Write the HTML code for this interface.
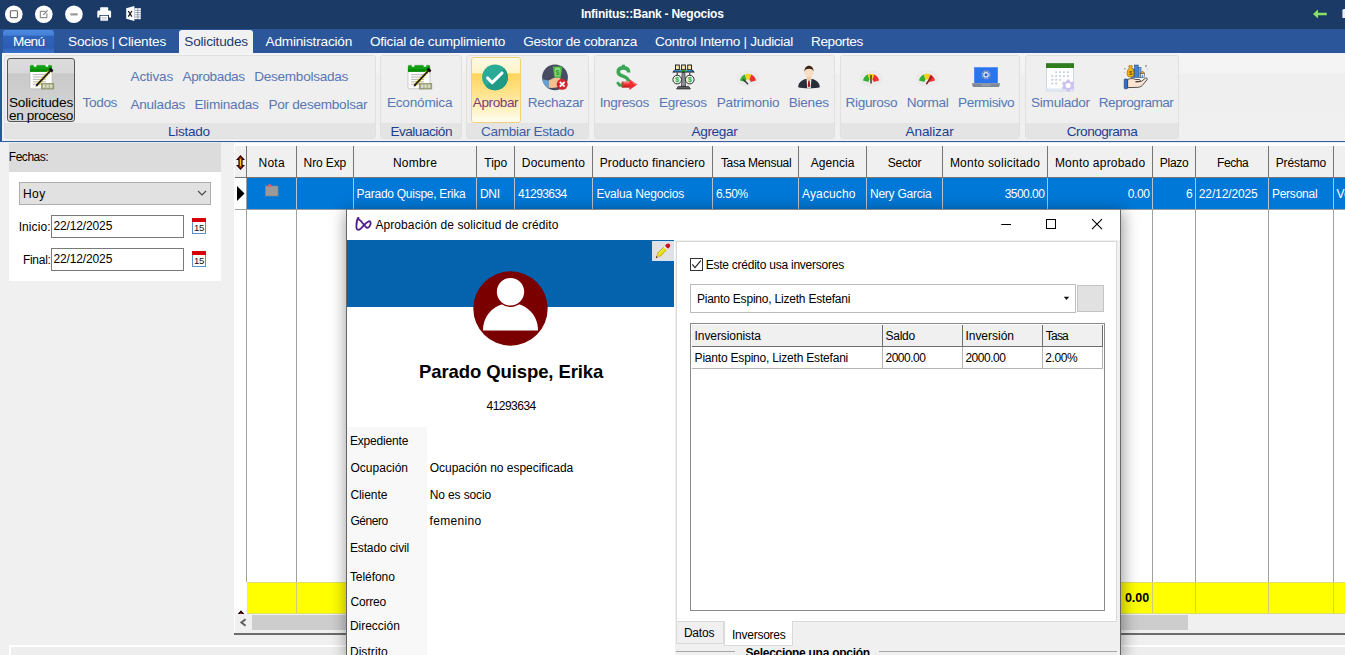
<!DOCTYPE html>
<html><head><meta charset="utf-8">
<style>
*{box-sizing:border-box;margin:0;padding:0}
html,body{width:1345px;height:655px;overflow:hidden;background:#f0f0f0;font-family:"Liberation Sans",sans-serif;}
.a{position:absolute}
.t{position:absolute;white-space:nowrap;line-height:1}
.grp{position:absolute;top:55px;height:84px;background:#efefef;border:1px solid #e0e0e0;border-radius:3px}
.grp i{position:absolute;left:0;right:0;bottom:0;height:15px;background:#e4e4e4;display:block}
.hd{position:absolute;top:146px;height:32px;background:#f0f0f0;border-right:1px solid #767676;border-bottom:1px solid #767676}
.vl{position:absolute;top:178px;width:1px;height:435px;background:#a0a0a0}
</style></head><body>
<div class="a" style="left:0;top:0;width:1345px;height:29px;background:#1b3a66"></div>
<svg class="a" style="left:0;top:0" width="160" height="29" viewBox="0 0 160 29">
<circle cx="13.8" cy="14.3" r="8.8" fill="#fff"/><rect x="10.4" y="10.8" width="7" height="6.8" rx=".8" fill="none" stroke="#6a6a6a" stroke-width="1.1"/>
<circle cx="43.8" cy="14.3" r="8.8" fill="#fff"/><path d="M45.6 11.3h-5.3v6.4h6.6v-4.4" fill="none" stroke="#777" stroke-width="1"/><path d="M43.4 14.8l4.2-4.4" stroke="#777" stroke-width="1.1"/>
<circle cx="73.9" cy="14.3" r="8.8" fill="#fff"/><rect x="70.1" y="13.2" width="7.8" height="2.3" rx="1.1" fill="#9a9a9a"/>
<g fill="#fff"><rect x="100.2" y="7.2" width="8" height="4.2" rx=".6"/><path d="M98.6 10.6h11.2a1.3 1.3 0 0 1 1.3 1.3v5.6h-2.1v-2.6h-9.6v2.6h-2.1v-5.6a1.3 1.3 0 0 1 1.3-1.3z"/><rect x="100.4" y="15.8" width="7.6" height="5" rx=".4"/></g>
<path d="M101.6 17.6h5.2M101.6 19.2h5.2" stroke="#9aa3b5" stroke-width=".6"/>
<path d="M126.2 8.3l8.2-2.3v15l-8.2-2.3z" fill="#fff"/><rect x="134.4" y="8.2" width="6.4" height="11" fill="#fff"/>
<path d="M134.8 10.4h6M134.8 12.6h6M134.8 14.8h6M134.8 17h6M137.8 8.2v11" stroke="#5a6d8c" stroke-width=".6"/>
<path d="M128.3 11l3.6 5.6M131.9 11l-3.6 5.6" stroke="#1c1c1c" stroke-width="1.3"/>
</svg>
<div class="t" style="left:580.90px;top:8.00px;font-size:12px;color:#fff;font-weight:bold;letter-spacing:-0.230px;">Infinitus::Bank - Negocios</div>
<svg class="a" style="left:1310px;top:6px" width="35" height="16" viewBox="0 0 35 16"><path d="M3 8l5-4.600v3.400h8.800v2.400h-8.800v3.400z" fill="#8be066"/><path d="M32.400 4.500a1.500 1.500 0 0 1 1.500-1.500h2v9h-3.500z" fill="#e8eef8"/></svg>
<div class="a" style="left:0;top:29px;width:1345px;height:24px;background:#2b579a"></div>
<div class="a" style="left:3px;top:30px;width:51px;height:23px;border-radius:3px 3px 0 0;background:linear-gradient(#4d8ae0 0,#4380d6 22%,#2f63ba 28%,#2c5db2 75%,#3b74cc 100%)"></div>
<div class="t" style="left:13.10px;top:34.50px;font-size:13.6px;color:#fff;font-weight:normal;letter-spacing:-0.704px;">Menú</div>
<div class="t" style="left:68.10px;top:34.50px;font-size:13.6px;color:#fff;font-weight:normal;letter-spacing:-0.182px;">Socios | Clientes</div>
<div class="a" style="left:179px;top:30px;width:74px;height:24px;border-radius:3px 3px 0 0;background:#f1f1f1"></div>
<div class="t" style="left:184.30px;top:34.50px;font-size:13.6px;color:#1e3a6e;font-weight:normal;letter-spacing:-0.195px;">Solicitudes</div>
<div class="t" style="left:265.50px;top:34.50px;font-size:13.6px;color:#fff;font-weight:normal;letter-spacing:-0.183px;">Administración</div>
<div class="t" style="left:369.90px;top:34.50px;font-size:13.6px;color:#fff;font-weight:normal;letter-spacing:-0.227px;">Oficial de cumplimiento</div>
<div class="t" style="left:523.30px;top:34.50px;font-size:13.6px;color:#fff;font-weight:normal;letter-spacing:-0.311px;">Gestor de cobranza</div>
<div class="t" style="left:654.90px;top:34.50px;font-size:13.6px;color:#fff;font-weight:normal;letter-spacing:-0.317px;">Control Interno | Judicial</div>
<div class="t" style="left:811.00px;top:34.50px;font-size:13.6px;color:#fff;font-weight:normal;letter-spacing:-0.409px;">Reportes</div>
<div class="a" style="left:0;top:53px;width:1345px;height:88px;background:linear-gradient(#f4f4f4 0,#f3f3f3 22%,#efefef 24%,#f0f0f0 100%)"></div>
<div class="a" style="left:0;top:53px;width:2px;height:88px;background:#2b579a"></div>
<div class="a" style="left:0;top:141px;width:1345px;height:1px;background:#34609f"></div>
<div class="a" style="left:0;top:142px;width:1345px;height:1px;background:#e9edf3"></div>
<div class="grp" style="left:4px;width:372px"><i></i></div>
<div class="grp" style="left:380px;width:82px"><i></i></div>
<div class="grp" style="left:466px;width:123px"><i></i></div>
<div class="grp" style="left:594px;width:241px"><i></i></div>
<div class="grp" style="left:840px;width:180px"><i></i></div>
<div class="grp" style="left:1025px;width:154px"><i></i></div>
<div class="t" style="left:168.00px;top:124.90px;font-size:13.6px;color:#1e3f8f;font-weight:normal;letter-spacing:-0.278px;">Listado</div>
<div class="t" style="left:390.40px;top:124.90px;font-size:13.6px;color:#1e3f8f;font-weight:normal;letter-spacing:-0.492px;">Evaluación</div>
<div class="t" style="left:481.00px;top:124.90px;font-size:13.6px;color:#3c5ea6;font-weight:normal;letter-spacing:-0.326px;">Cambiar Estado</div>
<div class="t" style="left:691.40px;top:124.90px;font-size:13.6px;color:#1e3f8f;font-weight:normal;letter-spacing:-0.311px;">Agregar</div>
<div class="t" style="left:905.60px;top:124.90px;font-size:13.6px;color:#1e3f8f;font-weight:normal;letter-spacing:-0.141px;">Analizar</div>
<div class="t" style="left:1066.80px;top:124.90px;font-size:13.6px;color:#1e3f8f;font-weight:normal;letter-spacing:-0.516px;">Cronograma</div>
<div class="a" style="left:7px;top:58px;width:68px;height:64px;border:1px solid #555;border-radius:3px;background:linear-gradient(#dcdcdc 0,#d8d8d8 22%,#c9c9c9 24%,#d6d6d6 100%)"></div>
<div class="t" style="left:8.90px;top:95.70px;font-size:13.6px;color:#000;font-weight:normal;letter-spacing:-0.141px;">Solicitudes</div>
<div class="t" style="left:8.90px;top:108.70px;font-size:13.6px;color:#000;font-weight:normal;letter-spacing:-0.307px;">en proceso</div>
<div class="t" style="left:82.60px;top:95.70px;font-size:13.6px;color:#5777b3;font-weight:normal;letter-spacing:-0.376px;">Todos</div>
<div class="t" style="left:130.50px;top:69.70px;font-size:13.6px;color:#5777b3;font-weight:normal;letter-spacing:-0.190px;">Activas</div>
<div class="t" style="left:182.50px;top:69.70px;font-size:13.6px;color:#5777b3;font-weight:normal;letter-spacing:-0.407px;">Aprobadas</div>
<div class="t" style="left:254.20px;top:69.70px;font-size:13.6px;color:#5777b3;font-weight:normal;letter-spacing:-0.276px;">Desembolsadas</div>
<div class="t" style="left:130.50px;top:98.40px;font-size:13.6px;color:#5777b3;font-weight:normal;letter-spacing:-0.273px;">Anuladas</div>
<div class="t" style="left:194.50px;top:98.40px;font-size:13.6px;color:#5777b3;font-weight:normal;letter-spacing:-0.240px;">Eliminadas</div>
<div class="t" style="left:268.40px;top:98.40px;font-size:13.6px;color:#5777b3;font-weight:normal;letter-spacing:-0.258px;">Por desembolsar</div>
<div class="t" style="left:386.90px;top:95.70px;font-size:13.6px;color:#5777b3;font-weight:normal;letter-spacing:-0.206px;">Económica</div>
<div class="a" style="left:471px;top:57px;width:50px;height:66px;border:1px solid #f0d17a;border-radius:3px;background:linear-gradient(#fffae4 0,#fff4c8 23%,#ffd45c 25%,#ffe38c 55%,#fff6d0 85%,#fffdf2 100%)"></div>
<div class="t" style="left:472.80px;top:95.70px;font-size:13.6px;color:#7a3b7c;font-weight:normal;letter-spacing:-0.425px;">Aprobar</div>
<div class="t" style="left:527.80px;top:95.70px;font-size:13.6px;color:#5777b3;font-weight:normal;letter-spacing:-0.323px;">Rechazar</div>
<div class="t" style="left:599.70px;top:95.70px;font-size:13.6px;color:#5777b3;font-weight:normal;letter-spacing:-0.368px;">Ingresos</div>
<div class="t" style="left:658.90px;top:95.70px;font-size:13.6px;color:#5777b3;font-weight:normal;letter-spacing:-0.282px;">Egresos</div>
<div class="t" style="left:716.80px;top:95.70px;font-size:13.6px;color:#5777b3;font-weight:normal;letter-spacing:-0.258px;">Patrimonio</div>
<div class="t" style="left:788.80px;top:95.70px;font-size:13.6px;color:#5777b3;font-weight:normal;letter-spacing:-0.280px;">Bienes</div>
<div class="t" style="left:845.50px;top:95.70px;font-size:13.6px;color:#5777b3;font-weight:normal;letter-spacing:-0.338px;">Riguroso</div>
<div class="t" style="left:906.70px;top:95.70px;font-size:13.6px;color:#5777b3;font-weight:normal;letter-spacing:-0.352px;">Normal</div>
<div class="t" style="left:958.10px;top:95.70px;font-size:13.6px;color:#5777b3;font-weight:normal;letter-spacing:-0.386px;">Permisivo</div>
<div class="t" style="left:1031.10px;top:95.70px;font-size:13.6px;color:#5777b3;font-weight:normal;letter-spacing:-0.289px;">Simulador</div>
<div class="t" style="left:1098.80px;top:95.70px;font-size:13.6px;color:#5777b3;font-weight:normal;letter-spacing:-0.499px;">Reprogramar</div>
<svg class="a" style="left:29px;top:64px" width="26" height="26" viewBox="0 0 26 26">
<rect x="1" y="1.2" width="22" height="23.6" rx="1.2" fill="#fdfdfd" stroke="#b9b9b9" stroke-width=".7"/>
<path d="M1 2.4a1.2 1.2 0 0 1 1.2-1.2h19.6a1.2 1.2 0 0 1 1.2 1.2v5.4H1z" fill="#12a012"/>
<path d="M1 5.2h22v2.6H1z" fill="#0a8a0a"/>
<rect x="4.8" y=".2" width="2.6" height="2.6" fill="#f4f4f4"/><rect x="16.6" y=".2" width="2.6" height="2.6" fill="#f4f4f4"/>
<path d="M4 10.6h13M4 13h13M4 15.4h13M4 17.8h13M4 20.2h9" stroke="#9a9a9a" stroke-width=".7"/>
<rect x="12.4" y="19.4" width="12.4" height="5.6" fill="#a7ad84" stroke="#7d845c" stroke-width=".6"/>
<rect x="14" y="20.6" width="2.4" height="3.2" fill="#d9dcc3"/><rect x="17.4" y="20.6" width="2.4" height="3.2" fill="#d9dcc3"/><rect x="20.8" y="20.6" width="2.4" height="3.2" fill="#d9dcc3"/>
<path d="M8.4 20.6L21.6 6.4" stroke="#e8c21a" stroke-width="3.4" stroke-dasharray="1.6 1"/>
<path d="M7.6 21.4L23 5" stroke="#1a1a1a" stroke-width="1.7"/>
<path d="M21.2 3.6l3.2 3-1.6 1.8-3.2-3z" fill="#111"/>
<path d="M6.6 22.6l.6-2.6 2 1.9z" fill="#222"/>
</svg>
<svg class="a" style="left:407px;top:64px" width="26" height="26" viewBox="0 0 26 26">
<rect x="1" y="1.2" width="22" height="23.6" rx="1.2" fill="#fdfdfd" stroke="#b9b9b9" stroke-width=".7"/>
<path d="M1 2.4a1.2 1.2 0 0 1 1.2-1.2h19.6a1.2 1.2 0 0 1 1.2 1.2v5.4H1z" fill="#12a012"/>
<path d="M1 5.2h22v2.6H1z" fill="#0a8a0a"/>
<rect x="4.8" y=".2" width="2.6" height="2.6" fill="#f4f4f4"/><rect x="16.6" y=".2" width="2.6" height="2.6" fill="#f4f4f4"/>
<path d="M4 10.6h13M4 13h13M4 15.4h13M4 17.8h13M4 20.2h9" stroke="#9a9a9a" stroke-width=".7"/>
<rect x="12.4" y="19.4" width="12.4" height="5.6" fill="#a7ad84" stroke="#7d845c" stroke-width=".6"/>
<rect x="14" y="20.6" width="2.4" height="3.2" fill="#d9dcc3"/><rect x="17.4" y="20.6" width="2.4" height="3.2" fill="#d9dcc3"/><rect x="20.8" y="20.6" width="2.4" height="3.2" fill="#d9dcc3"/>
<path d="M8.4 20.6L21.6 6.4" stroke="#e8c21a" stroke-width="3.4" stroke-dasharray="1.6 1"/>
<path d="M7.6 21.4L23 5" stroke="#1a1a1a" stroke-width="1.7"/>
<path d="M21.2 3.6l3.2 3-1.6 1.8-3.2-3z" fill="#111"/>
<path d="M6.6 22.6l.6-2.6 2 1.9z" fill="#222"/>
</svg>
<svg class="a" style="left:482px;top:63.5px" width="27" height="27" viewBox="0 0 27 27">
<circle cx="13" cy="13.3" r="12.9" fill="#2aab96"/>
<path d="M22.2 4.3A12.9 12.9 0 0 1 3.9 22.5z" fill="#1f9a86"/>
<path d="M5.6 14l4.6 4.6L20 9" fill="none" stroke="#fff" stroke-width="3.1" stroke-linecap="round" stroke-linejoin="round"/>
</svg>
<svg class="a" style="left:542px;top:63.5px" width="27" height="27" viewBox="0 0 27 27">
<defs><clipPath id="rc"><circle cx="13" cy="13.3" r="12.9"/></clipPath></defs>
<circle cx="13" cy="13.3" r="12.9" fill="#474c62"/>
<g clip-path="url(#rc)">
<path d="M10.8 2.4h9.6l-1.6 11.4h-6.4z" fill="#4cb648"/><rect x="12.8" y="3.6" width="5.6" height="9" rx="2.4" fill="#8bdc7c"/><text x="15.6" y="11.3" font-size="7.5" font-weight="bold" text-anchor="middle" fill="#2e9b2e" font-family="Liberation Sans">$</text>
<path d="M0 15.2l6.8 1.2v8.4L0 26z" fill="#5da2da"/>
<path d="M6.8 16.2c2-.4 3.800-1.8 6-2.400h4.600c1.600 0 1.600 2 0 2.200v6.600c-2.200 1.200-6.800 1.600-10.600 1.200z" fill="#f3c18f"/>
</g>
<circle cx="20.200" cy="20.300" r="5.500" fill="#d4242b"/>
<path d="M17.800 17.900l4.800 4.800M22.600 17.900l-4.800 4.800" stroke="#fff" stroke-width="1.9"/>
</svg>
<svg class="a" style="left:615px;top:63px" width="24" height="28" viewBox="0 0 24 28">
<path d="M8.400 1.700v4" stroke="#3aa655" stroke-width="3.200"/>
<path d="M13.800 9.400C13.800 5.800 11.200 4.900 8.400 4.900C5 4.900 3.200 6.700 3.200 9C3.200 14.600 13.400 11.600 13.400 18.600" fill="none" stroke="#3aa655" stroke-width="3.600"/>
<path d="M2.200 19.200l2.400 3 2.600-.2" fill="none" stroke="#3aa655" stroke-width="2.800"/>
<path d="M6.800 18.800h7.600v-2.600l7.800 5.400-7.800 5.400v-2.600H6.800z" fill="#ee2c2c"/>
<path d="M6.800 18.800h7.600v1.600H6.800zM14.400 16.200l7.800 5.400h-3z" fill="#ff7474"/>
<path d="M6.800 22.800h7.600v1.600H6.800z" fill="#b81c1c"/>
<path d="M6.800 18.800h1.600v5.600H6.800z" fill="#a0522d"/>
</svg>
<svg class="a" style="left:671.500px;top:64px" width="24" height="26" viewBox="0 0 24 26">
<path d="M10.100 8.400h2.800l.7 14h-4.200z" fill="#8c9096" stroke="#222" stroke-width=".6"/>
<path d="M6.200 22.400h10.600l1.600 2.600H4.600z" fill="#5a5d63" stroke="#111" stroke-width=".6"/>
<path d="M2.400 5.800h18.200l2.200 2.800H.2z" fill="#111"/>
<path d="M2.800 5.900h6l.4 1.700H1.600zM13.800 5.900h6l1.200 1.700h-7.600z" fill="#3aa0ee"/>
<path d="M9 5.800h5l.4 1.800H8.600z" fill="#3fc43f"/>
<g fill="#ffe9a8" stroke="#111" stroke-width=".9"><rect x="3.500" y="1" width="3.800" height="4.700"/><rect x="9.600" y="1" width="3.800" height="4.700"/><rect x="15.700" y="1" width="3.800" height="4.700"/></g>
<path d="M5.200 8.600v2.600M17.800 8.600v2.600" stroke="#111" stroke-width=".9"/>
<circle cx="5.200" cy="15.600" r="4.300" fill="#fff" stroke="#111" stroke-width=".9"/><circle cx="17.800" cy="15.600" r="4.300" fill="#fff" stroke="#111" stroke-width=".9"/>
<circle cx="5.200" cy="15.600" r="3.100" fill="#d4f0d4"/><circle cx="17.800" cy="15.600" r="3.100" fill="#d4f0d4"/>
<text x="5.200" y="18.100" font-size="6.800" font-weight="bold" text-anchor="middle" fill="#2fa84a" font-family="Liberation Sans">$</text>
<text x="17.800" y="18.100" font-size="6.800" font-weight="bold" text-anchor="middle" fill="#2fa84a" font-family="Liberation Sans">$</text>
</svg>
<svg class="a" style="left:736px;top:69px" width="24" height="18" viewBox="0 0 24 18">
<ellipse cx="12" cy="9.600" rx="11.600" ry="8" fill="#e6e6e6" opacity=".6"/>
<path d="M4 11.600A8.300 8.300 0 0 1 8.800 5.500L10.600 10.800A2.600 2.600 0 0 0 9.400 13z" fill="#35ae35"/>
<path d="M8.800 5.500A8.300 8.300 0 0 1 15.200 5.500L13.400 10.800A2.600 2.600 0 0 0 10.600 10.800z" fill="#f0d21c"/>
<path d="M15.200 5.500A8.300 8.300 0 0 1 20 11.600L14.600 13A2.600 2.600 0 0 0 13.400 10.800z" fill="#ee3030"/>
<path d="M11.600 14.800L7.600 10.800" stroke="#3a3a3a" stroke-width="1.500" stroke-linecap="round"/>
</svg>
<svg class="a" style="left:797px;top:65px" width="24" height="24" viewBox="0 0 24 24">
<path d="M1.200 22.200c0-4.400 3.200-7 7.400-8.200h6.800c4.200 1.200 7.400 3.800 7.400 8.200c-3.600 1.400-18 1.400-21.600 0z" fill="#2b2e38"/>
<path d="M9.600 13.600h4.800l-.6 9.400h-3.600z" fill="#f4f4f4"/>
<path d="M11.400 14.600h1.200l.7 6.400-1.300 1.800-1.300-1.800z" fill="#b01824"/>
<path d="M9.800 10.600h4.400v4l-2.200 1.400-2.200-1.400z" fill="#f0c7a4"/>
<ellipse cx="12" cy="7" rx="4.300" ry="5.500" fill="#f9dcc2"/>
<path d="M7.500 6.800C7.200 3 9.400 .8 12 .8s4.800 2.200 4.500 6c-.5-2-1.400-3-4.500-3s-4 1-4.500 3z" fill="#3b2313"/>
</svg>
<svg class="a" style="left:859px;top:69px" width="24" height="18" viewBox="0 0 24 18">
<ellipse cx="12" cy="9.600" rx="11.600" ry="8" fill="#e6e6e6" opacity=".6"/>
<path d="M4 11.600A8.300 8.300 0 0 1 8.800 5.500L10.600 10.800A2.600 2.600 0 0 0 9.400 13z" fill="#35ae35"/>
<path d="M8.800 5.500A8.300 8.300 0 0 1 15.200 5.500L13.400 10.800A2.600 2.600 0 0 0 10.600 10.800z" fill="#f0d21c"/>
<path d="M15.200 5.500A8.300 8.300 0 0 1 20 11.600L14.600 13A2.600 2.600 0 0 0 13.400 10.800z" fill="#ee3030"/>
<path d="M12 14.400V6" stroke="#4a3a1a" stroke-width="1.500"/>
</svg>
<svg class="a" style="left:915px;top:69px" width="24" height="18" viewBox="0 0 24 18">
<ellipse cx="12" cy="9.600" rx="11.600" ry="8" fill="#e6e6e6" opacity=".6"/>
<path d="M4 11.600A8.300 8.300 0 0 1 8.800 5.500L10.600 10.800A2.600 2.600 0 0 0 9.400 13z" fill="#35ae35"/>
<path d="M8.800 5.500A8.300 8.300 0 0 1 15.200 5.500L13.400 10.800A2.600 2.600 0 0 0 10.600 10.800z" fill="#f0d21c"/>
<path d="M15.200 5.500A8.300 8.300 0 0 1 20 11.600L14.600 13A2.600 2.600 0 0 0 13.400 10.800z" fill="#ee3030"/>
<path d="M11.800 14.600L16.400 8" stroke="#8a2020" stroke-width="1.700" stroke-linecap="round"/>
</svg>
<svg class="a" style="left:971px;top:66px" width="30" height="22" viewBox="0 0 30 22">
<rect x="3.200" y="1" width="23.600" height="16.200" rx=".6" fill="#2a74ec"/>
<rect x="3.200" y="1" width="23.600" height="1" fill="#5e96f2"/>
<path d="M.8 17.200h28.400l-1 3.200a1 1 0 0 1-1 .6H2.800a1 1 0 0 1-1-.6z" fill="#7d8894"/>
<rect x="10.500" y="18.600" width="9" height="1" fill="#a9b2bc"/>
<circle cx="15" cy="8.800" r="3.700" fill="none" stroke="#8fa0b8" stroke-width="1.900" stroke-dasharray="2.100 .8"/>
<circle cx="15" cy="8.800" r="2.700" fill="#e8eef8"/><circle cx="15" cy="8.800" r="1.500" fill="#1f5fd0"/>
</svg>
<svg class="a" style="left:1046px;top:62.500px" width="29" height="30" viewBox="0 0 29 30">
<rect x=".4" y=".6" width="27.200" height="27.400" fill="#fff" stroke="#c5d0e0" stroke-width=".8"/>
<rect x=".4" y="25.400" width="27.200" height="2.600" fill="#dfe8f2"/>
<rect x="0" y=".2" width="28" height="4.800" fill="#2f7d1f"/>
<rect x="9.2" y="8.2" width="1.900" height="1.900" rx=".4" fill="#c3d0e0"/><rect x="13.1" y="8.2" width="1.900" height="1.900" rx=".4" fill="#c3d0e0"/><rect x="17.0" y="8.2" width="1.900" height="1.900" rx=".4" fill="#c3d0e0"/><rect x="20.9" y="8.2" width="1.900" height="1.900" rx=".4" fill="#c3d0e0"/><rect x="5.3" y="12.0" width="1.900" height="1.900" rx=".4" fill="#c3d0e0"/><rect x="9.2" y="12.0" width="1.900" height="1.900" rx=".4" fill="#c3d0e0"/><rect x="13.1" y="12.0" width="1.900" height="1.900" rx=".4" fill="#c3d0e0"/><rect x="17.0" y="12.0" width="1.900" height="1.900" rx=".4" fill="#c3d0e0"/><rect x="20.9" y="12.0" width="1.900" height="1.900" rx=".4" fill="#c3d0e0"/><rect x="5.3" y="15.8" width="1.900" height="1.900" rx=".4" fill="#c3d0e0"/><rect x="9.2" y="15.8" width="1.900" height="1.900" rx=".4" fill="#c3d0e0"/><rect x="13.1" y="15.8" width="1.900" height="1.900" rx=".4" fill="#c3d0e0"/><rect x="5.3" y="19.6" width="1.900" height="1.900" rx=".4" fill="#c3d0e0"/><rect x="9.2" y="19.6" width="1.900" height="1.900" rx=".4" fill="#c3d0e0"/>
<g transform="translate(22.200,22.600)"><path d="M-1.300-6h2.600l.5 1.700 1.500.8 1.700-.6 1.300 2.200-1.300 1.200v1.400l1.300 1.200-1.300 2.200-1.700-.6-1.500.8-.5 1.700h-2.600l-.5-1.700-1.500-.8-1.700.6-1.300-2.200 1.300-1.200v-1.400l-1.300-1.200 1.300-2.200 1.700.6 1.500-.8z" fill="#cbc2ee"/><circle r="2.500" fill="#fff"/></g>
</svg>
<svg class="a" style="left:1123px;top:64px" width="27" height="26" viewBox="0 0 27 26">
<rect x="8.400" y="5" width="3" height="8.400" fill="#3f86dc" stroke="#1c3f78" stroke-width=".5"/>
<rect x="11.400" y="1" width="3.800" height="12.400" fill="#3f86dc" stroke="#1c3f78" stroke-width=".5"/>
<rect x="15.200" y="3.600" width="2.800" height="9.800" fill="#6aa6ec" stroke="#1c3f78" stroke-width=".5"/>
<path d="M16.800 9.600l2.600-2.600 2.600 2.600z" fill="#f0a020" stroke="#6a4208" stroke-width=".5"/><rect x="17.400" y="9.600" width="4" height="3.800" fill="#fbe9c8" stroke="#444" stroke-width=".5"/><rect x="18.800" y="11" width="1.300" height="2.400" fill="#3f86dc"/>
<path d="M5.600 2.200c.8-.9 3.200-.9 4 0l-.9 1.700c2 1.400 2.600 4.200 2.200 6.800c-.2 1.600-1.300 2.400-3.300 2.400s-3.100-.8-3.300-2.400c-.4-2.600.2-5.400 2.200-6.800z" fill="#f0b41c" stroke="#7a5200" stroke-width=".6"/>
<text x="7.600" y="11.200" font-size="6" font-weight="bold" text-anchor="middle" fill="#7a5200" font-family="Liberation Sans">$</text>
<path d="M4.600 15.600c2.600-1.400 5.200-1.400 7.600-.2l4.200.2c1.200.2 1.200 1.800 0 2l-3.800.2 5.800-.4 4-3.200c1.200-.8 2.400.4 1.600 1.600l-4.600 5.600c-1.600 1.600-3.800 2-6.400 2l-8.400.2z" fill="#fce4d0" stroke="#2a2a2a" stroke-width=".8" stroke-linejoin="round"/>
<rect x="1.200" y="15" width="3.400" height="9.800" rx=".8" fill="#2f6fd0" stroke="#17396e" stroke-width=".6"/>
<circle cx="1.800" cy="4.800" r=".8" fill="#8a8a8a"/><circle cx="23" cy="2" r=".9" fill="#8a8a8a"/><circle cx="1.200" cy="8.200" r=".5" fill="#aaa"/><circle cx="24.600" cy="5" r=".5" fill="#aaa"/>
</svg>
<div class="a" style="left:9px;top:143px;width:212px;height:29px;background:#dcdcdc"></div>
<div class="a" style="left:9px;top:172px;width:212px;height:109px;background:#fff"></div>
<div class="t" style="left:8.80px;top:151.00px;font-size:12px;color:#000;font-weight:normal;letter-spacing:-0.470px;">Fechas:</div>
<div class="a" style="left:19px;top:182px;width:192px;height:23px;background:#e1e1e1;border:1px solid #adadad"></div>
<div class="t" style="left:22.90px;top:187.50px;font-size:12px;color:#000;font-weight:normal;letter-spacing:0.452px;">Hoy</div>
<svg class="a" style="left:197px;top:190px" width="10" height="7" viewBox="0 0 10 7"><path d="M1 1l4 4 4-4" fill="none" stroke="#444" stroke-width="1.1"/></svg>
<div class="t" style="left:18.70px;top:220.70px;font-size:12px;color:#000;font-weight:normal;letter-spacing:0.077px;">Inicio:</div>
<div class="a" style="left:51px;top:215px;width:133px;height:23px;background:#fff;border:1px solid #7a7a7a"></div>
<div class="t" style="left:53.40px;top:219.70px;font-size:12px;color:#000;font-weight:normal;letter-spacing:-0.126px;">22/12/2025</div>
<div class="t" style="left:22.90px;top:254.00px;font-size:12px;color:#000;font-weight:normal;letter-spacing:-0.274px;">Final:</div>
<div class="a" style="left:51px;top:248px;width:133px;height:23px;background:#fff;border:1px solid #7a7a7a"></div>
<div class="t" style="left:53.40px;top:252.70px;font-size:12px;color:#000;font-weight:normal;letter-spacing:-0.126px;">22/12/2025</div>
<svg class="a" style="left:192px;top:218px" width="14" height="16" viewBox="0 0 14 16"><rect x=".5" y=".5" width="13" height="15" fill="#fff" stroke="#5a8fd0"/><rect x="0" y="0" width="14" height="4" fill="#d6000a"/><text x="7" y="13.200" font-size="9.600" letter-spacing="-.4" text-anchor="middle" font-family="Liberation Sans" fill="#111">15</text></svg>
<svg class="a" style="left:192px;top:251px" width="14" height="16" viewBox="0 0 14 16"><rect x=".5" y=".5" width="13" height="15" fill="#fff" stroke="#5a8fd0"/><rect x="0" y="0" width="14" height="4" fill="#d6000a"/><text x="7" y="13.200" font-size="9.600" letter-spacing="-.4" text-anchor="middle" font-family="Liberation Sans" fill="#111">15</text></svg>
<div class="a" style="left:234px;top:143px;width:1111px;height:492px;background:#fff"></div>
<div class="hd" style="left:235px;width:12px"></div>
<div class="hd" style="left:247px;width:50px"></div>
<div class="hd" style="left:297px;width:57px"></div>
<div class="hd" style="left:354px;width:123px"></div>
<div class="hd" style="left:477px;width:38px"></div>
<div class="hd" style="left:515px;width:78px"></div>
<div class="hd" style="left:593px;width:120px"></div>
<div class="hd" style="left:713px;width:86px"></div>
<div class="hd" style="left:799px;width:68px"></div>
<div class="hd" style="left:867px;width:76px"></div>
<div class="hd" style="left:943px;width:105px"></div>
<div class="hd" style="left:1048px;width:105px"></div>
<div class="hd" style="left:1153px;width:43px"></div>
<div class="hd" style="left:1196px;width:73px"></div>
<div class="hd" style="left:1269px;width:65px"></div>
<div class="hd" style="left:1334px;width:20px"></div>
<div class="t" style="left:258.50px;top:156.60px;font-size:12px;color:#000;font-weight:normal;letter-spacing:0.260px;">Nota</div>
<div class="t" style="left:303.60px;top:156.60px;font-size:12px;color:#000;font-weight:normal;letter-spacing:-0.123px;">Nro Exp</div>
<div class="t" style="left:392.90px;top:156.60px;font-size:12px;color:#000;font-weight:normal;letter-spacing:0.285px;">Nombre</div>
<div class="t" style="left:484.30px;top:156.60px;font-size:12px;color:#000;font-weight:normal;letter-spacing:-0.002px;">Tipo</div>
<div class="t" style="left:521.80px;top:156.60px;font-size:12px;color:#000;font-weight:normal;letter-spacing:0.225px;">Documento</div>
<div class="t" style="left:599.70px;top:156.60px;font-size:12px;color:#000;font-weight:normal;letter-spacing:0.105px;">Producto financiero</div>
<div class="t" style="left:720.90px;top:156.60px;font-size:12px;color:#000;font-weight:normal;letter-spacing:-0.304px;">Tasa Mensual</div>
<div class="t" style="left:810.80px;top:156.60px;font-size:12px;color:#000;font-weight:normal;letter-spacing:0.046px;">Agencia</div>
<div class="t" style="left:887.80px;top:156.60px;font-size:12px;color:#000;font-weight:normal;letter-spacing:-0.215px;">Sector</div>
<div class="t" style="left:949.90px;top:156.60px;font-size:12px;color:#000;font-weight:normal;letter-spacing:0.218px;">Monto solicitado</div>
<div class="t" style="left:1054.90px;top:156.60px;font-size:12px;color:#000;font-weight:normal;letter-spacing:0.214px;">Monto aprobado</div>
<div class="t" style="left:1159.80px;top:156.60px;font-size:12px;color:#000;font-weight:normal;letter-spacing:-0.266px;">Plazo</div>
<div class="t" style="left:1217.00px;top:156.60px;font-size:12px;color:#000;font-weight:normal;letter-spacing:-0.432px;">Fecha</div>
<div class="t" style="left:1275.70px;top:156.60px;font-size:12px;color:#000;font-weight:normal;letter-spacing:-0.120px;">Préstamo</div>
<svg class="a" style="left:236px;top:155px" width="9" height="15" viewBox="0 0 9 15"><path d="M4.5 0L9 5H6.6V10H9L4.5 15L0 10H2.4V5H0z" fill="#2a0000"/><path d="M3.7 3.4h1.6v8.2H3.7z" fill="#ffc400"/><path d="M4.5 1.8L6.3 4H2.7zM4.5 13.2L6.3 11H2.7z" fill="#b03000"/></svg>
<div class="a" style="left:235px;top:178px;width:12px;height:32px;background:#fff;border-bottom:1px solid #a0a0a0"></div>
<svg class="a" style="left:237px;top:186px" width="8" height="15" viewBox="0 0 8 15"><path d="M0 0l7.5 7.5L0 15z" fill="#000"/></svg>
<div class="a" style="left:247px;top:178px;width:1098px;height:32px;background:#0078d7"></div>
<div class="vl" style="left:246px;height:404px"></div>
<div class="vl" style="left:296px"></div>
<div class="vl" style="left:353px"></div>
<div class="vl" style="left:476px"></div>
<div class="vl" style="left:514px"></div>
<div class="vl" style="left:592px"></div>
<div class="vl" style="left:712px"></div>
<div class="vl" style="left:798px"></div>
<div class="vl" style="left:866px"></div>
<div class="vl" style="left:942px"></div>
<div class="vl" style="left:1047px"></div>
<div class="vl" style="left:1152px"></div>
<div class="vl" style="left:1195px"></div>
<div class="vl" style="left:1268px"></div>
<div class="vl" style="left:1333px"></div>
<div class="a" style="left:247px;top:209px;width:1098px;height:1px;background:#a0a0a0"></div>
<div class="a" style="left:296px;top:178px;width:1px;height:31px;background:#b9c3d0"></div>
<div class="a" style="left:353px;top:178px;width:1px;height:31px;background:#b9c3d0"></div>
<div class="a" style="left:476px;top:178px;width:1px;height:31px;background:#b9c3d0"></div>
<div class="a" style="left:514px;top:178px;width:1px;height:31px;background:#b9c3d0"></div>
<div class="a" style="left:592px;top:178px;width:1px;height:31px;background:#b9c3d0"></div>
<div class="a" style="left:712px;top:178px;width:1px;height:31px;background:#b9c3d0"></div>
<div class="a" style="left:798px;top:178px;width:1px;height:31px;background:#b9c3d0"></div>
<div class="a" style="left:866px;top:178px;width:1px;height:31px;background:#b9c3d0"></div>
<div class="a" style="left:942px;top:178px;width:1px;height:31px;background:#b9c3d0"></div>
<div class="a" style="left:1047px;top:178px;width:1px;height:31px;background:#b9c3d0"></div>
<div class="a" style="left:1152px;top:178px;width:1px;height:31px;background:#b9c3d0"></div>
<div class="a" style="left:1195px;top:178px;width:1px;height:31px;background:#b9c3d0"></div>
<div class="a" style="left:1268px;top:178px;width:1px;height:31px;background:#b9c3d0"></div>
<div class="a" style="left:1333px;top:178px;width:1px;height:31px;background:#b9c3d0"></div>
<div class="t" style="left:356.60px;top:188.00px;font-size:12px;color:#fff;font-weight:normal;letter-spacing:-0.263px;">Parado Quispe, Erika</div>
<div class="t" style="left:479.90px;top:188.00px;font-size:12px;color:#fff;font-weight:normal;letter-spacing:-0.257px;">DNI</div>
<div class="t" style="left:517.90px;top:188.00px;font-size:12px;color:#fff;font-weight:normal;letter-spacing:-0.586px;">41293634</div>
<div class="t" style="left:596.40px;top:188.00px;font-size:12px;color:#fff;font-weight:normal;letter-spacing:-0.164px;">Evalua Negocios</div>
<div class="t" style="left:715.90px;top:188.00px;font-size:12px;color:#fff;font-weight:normal;letter-spacing:-0.466px;">6.50%</div>
<div class="t" style="left:802.10px;top:188.00px;font-size:12px;color:#fff;font-weight:normal;letter-spacing:0.114px;">Ayacucho</div>
<div class="t" style="left:870.00px;top:188.00px;font-size:12px;color:#fff;font-weight:normal;letter-spacing:-0.238px;">Nery Garcia</div>
<div class="t" style="left:1004.70px;top:188.00px;font-size:12px;color:#fff;font-weight:normal;letter-spacing:-0.542px;">3500.00</div>
<div class="t" style="left:1127.80px;top:188.00px;font-size:12px;color:#fff;font-weight:normal;letter-spacing:-0.415px;">0.00</div>
<div class="t" style="left:1186.00px;top:188.00px;font-size:12px;color:#fff;font-weight:normal;letter-spacing:0.013px;">6</div>
<div class="t" style="left:1198.80px;top:188.00px;font-size:12px;color:#fff;font-weight:normal;letter-spacing:-0.126px;">22/12/2025</div>
<div class="t" style="left:1271.90px;top:188.00px;font-size:12px;color:#fff;font-weight:normal;letter-spacing:-0.234px;">Personal</div>
<div class="t" style="left:1336.60px;top:188.00px;font-size:12px;color:#fff;font-weight:normal;letter-spacing:-0.008px;">Ve</div>
<svg class="a" style="left:265px;top:183px" width="14" height="14" viewBox="0 0 14 14"><rect x=".5" y="3" width="12.5" height="10" fill="#9a9a9a" stroke="#858585" stroke-width=".6"/><circle cx="4.8" cy="2.6" r="1.7" fill="#ee5c5c"/></svg>
<div class="a" style="left:247px;top:582px;width:1098px;height:32px;background:#ffff00;border-top:1px solid #dede70;border-bottom:1px solid #dede70"></div>
<div class="a" style="left:296px;top:583px;width:1px;height:30px;background:#cdcd78"></div>
<div class="a" style="left:353px;top:583px;width:1px;height:30px;background:#cdcd78"></div>
<div class="a" style="left:476px;top:583px;width:1px;height:30px;background:#cdcd78"></div>
<div class="a" style="left:514px;top:583px;width:1px;height:30px;background:#cdcd78"></div>
<div class="a" style="left:592px;top:583px;width:1px;height:30px;background:#cdcd78"></div>
<div class="a" style="left:712px;top:583px;width:1px;height:30px;background:#cdcd78"></div>
<div class="a" style="left:798px;top:583px;width:1px;height:30px;background:#cdcd78"></div>
<div class="a" style="left:866px;top:583px;width:1px;height:30px;background:#cdcd78"></div>
<div class="a" style="left:942px;top:583px;width:1px;height:30px;background:#cdcd78"></div>
<div class="a" style="left:1047px;top:583px;width:1px;height:30px;background:#cdcd78"></div>
<div class="a" style="left:1152px;top:583px;width:1px;height:30px;background:#cdcd78"></div>
<div class="a" style="left:1195px;top:583px;width:1px;height:30px;background:#cdcd78"></div>
<div class="a" style="left:1268px;top:583px;width:1px;height:30px;background:#cdcd78"></div>
<div class="a" style="left:1333px;top:583px;width:1px;height:30px;background:#cdcd78"></div>
<div class="t" style="left:1124.90px;top:592.25px;font-size:12.5px;color:#000;font-weight:bold;letter-spacing:0.014px;">0.00</div>
<svg class="a" style="left:236.500px;top:609.500px" width="8" height="5" viewBox="0 0 8 5"><path d="M.2 4.600L4 .3l3.800 4.300z" fill="#1a0000"/><path d="M2.600 4.600L4 2.800l1.400 1.800z" fill="#e04818"/></svg>
<div class="a" style="left:235px;top:614px;width:1110px;height:19px;background:#f0f0f0"></div>
<div class="a" style="left:252px;top:615px;width:936px;height:15px;background:#cdcdcd"></div>
<svg class="a" style="left:239px;top:618px" width="8" height="9" viewBox="0 0 8 9"><path d="M6.600 1.300L2.400 4.500l4.200 3.200" fill="none" stroke="#606060" stroke-width="2"/></svg>
<div class="a" style="left:234px;top:633px;width:1111px;height:2px;background:#6c6c6c"></div>
<div class="a" style="left:9px;top:645px;width:1340px;height:10px;background:#eeeeee;border-top:2px solid #fff;border-left:2px solid #fff"></div>
<div class="a" style="left:346px;top:209px;width:775px;height:446px;background:#fff;border:1px solid #666;border-top-color:#8c8c8c;border-bottom:none;box-shadow:1px 3px 15px 1px rgba(0,0,0,.4)"></div>
<svg class="a" style="left:355px;top:217px" width="17" height="14" viewBox="0 0 17 14"><path d="M3.400 .6C1.900 2.600 1.200 6 1.500 10.800C1.700 13 3.600 13.300 5.200 12C7.600 10 10.600 5.400 13.800 4.300C15.600 3.800 16 6 15.200 8C14.400 10 13 11.200 11.600 10.600C9.400 9.600 7.400 4.200 3.800 2.200" fill="none" stroke="#4f1f8c" stroke-width="1.800" stroke-linecap="round"/></svg>
<div class="t" style="left:375.40px;top:218.70px;font-size:12px;color:#000;font-weight:normal;letter-spacing:0.090px;">Aprobación de solicitud de crédito</div>
<svg class="a" style="left:1000px;top:217px" width="110" height="14" viewBox="0 0 110 14"><path d="M1.2 7.5h9.8" stroke="#000" stroke-width="1"/><rect x="46.5" y="2.5" width="9" height="9" fill="none" stroke="#000" stroke-width="1"/><path d="M92 2.2l10 10M102 2.2L92 12.2" stroke="#000" stroke-width="1.1"/></svg>
<div class="a" style="left:347px;top:240px;width:327px;height:67px;background:#0563ad"></div>
<div class="a" style="left:652px;top:241px;width:22px;height:20px;background:#e1e1e1;border:1px solid #d5e3f0"></div>
<svg class="a" style="left:653px;top:241px" width="21" height="20" viewBox="0 0 21 20"><path d="M2.800 16.900L3.700 12.900L6.800 16z" fill="#e9b98a"/><path d="M2.800 16.900l.5-1.900 1.400 1.400z" fill="#2a1a10"/><path d="M5.30 14.40 L12.20 7.50" stroke="#b09c00" stroke-width="4.400"/><path d="M5.30 14.40 L12.20 7.50" stroke="#e8e000" stroke-width="3.200"/><path d="M5.70 14.00 L11.90 7.80" stroke="#f8f27a" stroke-width=".9" transform="translate(-.6,-.6)"/><path d="M12.20 7.50 L13.40 6.30" stroke="#f4f4f4" stroke-width="4"/><path d="M13.40 6.30 L15.20 4.50" stroke="#d20f1f" stroke-width="4.100"/><circle cx="15.10" cy="4.60" r="2" fill="#d20f1f"/></svg>
<svg class="a" style="left:473px;top:271px" width="75" height="75" viewBox="0 0 75 75"><circle cx="37.5" cy="37.5" r="37.2" fill="#7a0000"/><path d="M10 59.5C10 42 24 32 37.5 32S65 42 65 59.5z" fill="#fff"/><circle cx="37.5" cy="20.8" r="14.4" fill="#fff" stroke="#7a0000" stroke-width="1.4"/></svg>
<div class="t" style="left:419.10px;top:363.15px;font-size:18.5px;color:#000;font-weight:bold;letter-spacing:-0.100px;">Parado Quispe, Erika</div>
<div class="t" style="left:486.50px;top:399.70px;font-size:12px;color:#000;font-weight:normal;letter-spacing:-0.524px;">41293634</div>
<div class="a" style="left:347px;top:427px;width:80px;height:228px;background:#f8f8f8"></div>
<div class="t" style="left:349.90px;top:435.00px;font-size:12px;color:#000;font-weight:normal;letter-spacing:-0.165px;">Expediente</div>
<div class="t" style="left:350.40px;top:462.00px;font-size:12px;color:#000;font-weight:normal;letter-spacing:0.036px;">Ocupación</div>
<div class="t" style="left:350.40px;top:489.00px;font-size:12px;color:#000;font-weight:normal;letter-spacing:-0.066px;">Cliente</div>
<div class="t" style="left:350.40px;top:515.00px;font-size:12px;color:#000;font-weight:normal;letter-spacing:-0.439px;">Género</div>
<div class="t" style="left:349.90px;top:541.70px;font-size:12px;color:#000;font-weight:normal;letter-spacing:-0.125px;">Estado civil</div>
<div class="t" style="left:349.90px;top:571.00px;font-size:12px;color:#000;font-weight:normal;letter-spacing:-0.059px;">Teléfono</div>
<div class="t" style="left:350.40px;top:596.00px;font-size:12px;color:#000;font-weight:normal;letter-spacing:-0.165px;">Correo</div>
<div class="t" style="left:349.90px;top:619.70px;font-size:12px;color:#000;font-weight:normal;letter-spacing:-0.013px;">Dirección</div>
<div class="t" style="left:349.90px;top:646.00px;font-size:12px;color:#000;font-weight:normal;letter-spacing:0.070px;">Distrito</div>
<div class="t" style="left:429.80px;top:462.00px;font-size:12px;color:#000;font-weight:normal;letter-spacing:-0.028px;">Ocupación no especificada</div>
<div class="t" style="left:429.80px;top:489.00px;font-size:12px;color:#000;font-weight:normal;letter-spacing:-0.137px;">No es socio</div>
<div class="t" style="left:429.60px;top:515.00px;font-size:12px;color:#000;font-weight:normal;letter-spacing:0.328px;">femenino</div>
<div class="a" style="left:675px;top:240px;width:445px;height:415px;background:#f0f0f0"></div>
<div class="a" style="left:676px;top:241px;width:441px;height:381px;background:#fff;border:1px solid #dadada"></div>
<div class="a" style="left:690px;top:258px;width:13px;height:13px;background:#fff;border:1px solid #333"></div>
<svg class="a" style="left:691px;top:259px" width="11" height="11" viewBox="0 0 11 11"><path d="M1.300 5.300l2.700 3.300L9.800 1.600" fill="none" stroke="#222" stroke-width="1.150"/></svg>
<div class="t" style="left:705.70px;top:259.40px;font-size:12px;color:#000;font-weight:normal;letter-spacing:-0.242px;">Este crédito usa inversores</div>
<div class="a" style="left:690px;top:284px;width:386px;height:29px;background:#fff;border:1px solid #bcbcbc"></div>
<div class="t" style="left:696.90px;top:292.90px;font-size:12px;color:#000;font-weight:normal;letter-spacing:-0.205px;">Pianto Espino, Lizeth Estefani</div>
<svg class="a" style="left:1063px;top:296px" width="7" height="5" viewBox="0 0 7 5"><path d="M.8 .8h5.4L3.5 4z" fill="#111"/></svg>
<div class="a" style="left:1077px;top:285px;width:27px;height:27px;background:#e1e1e1;border:1px solid #c4c4c4"></div>
<div class="a" style="left:690px;top:323px;width:415px;height:288px;background:#fff;border:1px solid #8a8a8a"></div>
<div class="a" style="left:692px;top:325px;width:411px;height:22px;background:#f0f0f0;border-bottom:1px solid #6e6e6e"></div>
<div class="a" style="left:882px;top:325px;width:1px;height:22px;background:#6e6e6e"></div>
<div class="a" style="left:882px;top:347px;width:1px;height:22px;background:#b4b4b4"></div>
<div class="a" style="left:962px;top:325px;width:1px;height:22px;background:#6e6e6e"></div>
<div class="a" style="left:962px;top:347px;width:1px;height:22px;background:#b4b4b4"></div>
<div class="a" style="left:1042px;top:325px;width:1px;height:22px;background:#6e6e6e"></div>
<div class="a" style="left:1042px;top:347px;width:1px;height:22px;background:#b4b4b4"></div>
<div class="a" style="left:1102px;top:325px;width:1px;height:22px;background:#6e6e6e"></div>
<div class="a" style="left:1102px;top:347px;width:1px;height:22px;background:#b4b4b4"></div>
<div class="a" style="left:692px;top:368px;width:411px;height:1px;background:#b4b4b4"></div>
<div class="t" style="left:694.60px;top:330.20px;font-size:12px;color:#000;font-weight:normal;letter-spacing:-0.083px;">Inversionista</div>
<div class="t" style="left:885.50px;top:330.20px;font-size:12px;color:#000;font-weight:normal;letter-spacing:-0.241px;">Saldo</div>
<div class="t" style="left:965.40px;top:330.20px;font-size:12px;color:#000;font-weight:normal;letter-spacing:-0.011px;">Inversión</div>
<div class="t" style="left:1045.80px;top:330.20px;font-size:12px;color:#000;font-weight:normal;letter-spacing:-0.790px;">Tasa</div>
<div class="t" style="left:694.60px;top:352.20px;font-size:12px;color:#000;font-weight:normal;letter-spacing:-0.198px;">Pianto Espino, Lizeth Estefani</div>
<div class="t" style="left:885.50px;top:352.20px;font-size:12px;color:#000;font-weight:normal;letter-spacing:-0.499px;">2000.00</div>
<div class="t" style="left:965.40px;top:352.20px;font-size:12px;color:#000;font-weight:normal;letter-spacing:-0.470px;">2000.00</div>
<div class="t" style="left:1045.30px;top:352.20px;font-size:12px;color:#000;font-weight:normal;letter-spacing:-0.386px;">2.00%</div>
<div class="a" style="left:676px;top:622px;width:48px;height:22px;background:#f0f0f0;border:1px solid #dadada;border-top:none"></div>
<div class="t" style="left:683.90px;top:626.70px;font-size:12px;color:#000;font-weight:normal;letter-spacing:-0.192px;">Datos</div>
<div class="a" style="left:724px;top:621px;width:69px;height:25px;background:#fff;border:1px solid #dadada;border-top:none"></div>
<div class="t" style="left:731.90px;top:629.00px;font-size:12px;color:#000;font-weight:normal;letter-spacing:-0.233px;">Inversores</div>
<div class="a" style="left:676px;top:651px;width:441px;height:1px;background:#a8a8a8"></div>
<div class="a" style="left:735px;top:648px;width:144px;height:7px;background:#f0f0f0"></div>
<div class="t" style="left:745.60px;top:646.50px;font-size:12px;color:#000;font-weight:bold;letter-spacing:-0.278px;">Seleccione una opción</div>
</body></html>
